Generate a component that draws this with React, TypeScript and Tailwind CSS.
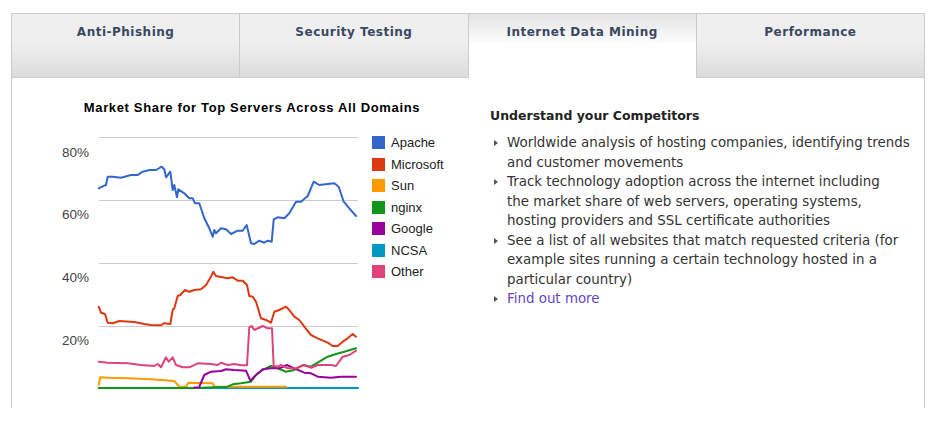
const tabs = ["Anti-Phishing", "Security Testing", "Internet Data Mining", "Performance"];
const activeTab = 2;

const series: { name: string; color: string; points: string }[] = [
  {
    name: "NCSA",
    color: "#0099c6",
    points: "98,388 357,388",
  },
  {
    name: "Sun",
    color: "#ff9900",
    points:
      "97.7,385 99.3,377.3 106.7,377.7 126.7,378.3 150,379.3 173.3,381 178.3,386.7 185,386.7 187.3,382.7 211.7,383.3 213.3,386.7 285,386.7",
  },
  {
    name: "nginx",
    color: "#109618",
    points:
      "97.7,388 196,388 213.3,387.3 226.7,386.7 231.7,384.3 240,383.3 250,381.7 255,375 261.7,370 270,366 276.7,368.3 285,371.7 293.3,370 301.7,365 310,366.7 318.3,361.7 326.7,356.7 335,354 343.3,351.7 355,348.3",
  },
  {
    name: "Google",
    color: "#990099",
    points:
      "193.3,387.5 198,387.5 203.3,375 210,371.7 220,371 225,369.3 233.3,370 245,370.7 249.3,380.7 255,375 261.7,369.3 270,368.3 278.3,368.3 286,365 293.3,368.3 303.3,372.7 310,373.3 316.7,376.7 330,377.7 340,376.7 355,376.7",
  },
  {
    name: "Other",
    color: "#dd4477",
    points:
      "97.7,361.7 106.7,362.7 126.7,363.3 140,365 153.3,366 156.7,364 160,367.3 165,357.3 167.7,361.7 171.7,357.3 175,365 181.7,367.3 188.3,367.3 196.7,363.3 210,364 216.7,365 220,362.7 226.7,365 233.3,364 240,365.3 246,365.3 248.3,327.3 250.7,326 253.3,330 261.7,326 266.7,328.3 271,328.3 272.7,366 276.7,366.7 280,365 286.7,368.3 295,368.3 303.3,365 310,367.7 316.7,365 330,365 335,366 341.7,356.7 348.3,355 355,350.7",
  },
  {
    name: "Microsoft",
    color: "#dc3912",
    points:
      "97.7,306.7 100,312.7 104,314 106.7,322.7 111.7,323.3 118.3,321 133.3,322 143.3,324 150,325 160,325.3 162.7,323.3 169.3,324 171.7,310 173.3,308.3 176.7,296 179.3,295 184,290 188.3,291.7 193.3,290 200,289.3 205,285 210,276.7 212.3,271.7 215,276 226.7,278.3 231.7,277.3 236.7,280.7 241.7,280.7 246,285 248.3,296 251.7,296.7 255,301.7 260,318.3 265,320 270,322.7 273.3,311.7 278.3,310 285,306.7 288.3,310 293.3,316.7 298.3,320 303.3,326.7 310,335 316.7,338.3 326.7,342.7 331.7,346 336.7,346 341.7,341.7 346.7,338.3 351.7,334 355,336.7",
  },
  {
    name: "Apache",
    color: "#3366cc",
    points:
      "97.7,188.3 103.3,185.7 105,185 106.7,176.7 111.7,176.7 120,177.7 130,175 136.7,175 141.7,171.7 148.3,170 155,170 160.7,166.7 163.3,169.3 165,177.3 169.3,171.7 171.7,190 173.3,185 176,197.3 177.3,189.3 183.3,193.3 188.3,198.3 191.7,198.3 194,203.3 198.3,203.3 203.3,218.3 208.3,228.3 211.7,236.7 213.3,230 215,233.3 220,228.3 225,229.3 230,234 236.7,230.7 241.7,230.7 245.7,225 250,243.3 253.3,244 258.3,240.7 263.3,242.7 266.7,240.7 270.7,241.7 272.7,219.3 276.7,217.3 283.3,218.3 288.3,213.3 295,201.7 300,201.7 306.7,196 312.7,181.7 318.3,185 326.7,184 333.3,183.3 337.7,186.7 342.7,201.7 348.3,208.3 355,216",
  },
];

const legend = [
  { name: "Apache", color: "bg-[#3366cc]" },
  { name: "Microsoft", color: "bg-[#dc3912]" },
  { name: "Sun", color: "bg-[#ff9900]" },
  { name: "nginx", color: "bg-[#109618]" },
  { name: "Google", color: "bg-[#990099]" },
  { name: "NCSA", color: "bg-[#0099c6]" },
  { name: "Other", color: "bg-[#dd4477]" },
];

// line breaks as in the original
const bullets = [
  ["Worldwide analysis of hosting companies, identifying trends", "and customer movements"],
  [
    "Track technology adoption across the internet including",
    "the market share of web servers, operating systems,",
    "hosting providers and SSL certificate authorities",
  ],
  [
    "See a list of all websites that match requested criteria (for",
    "example sites running a certain technology hosted in a",
    "particular country)",
  ],
];

function Arrow() {
  return (
    <span className="w-[17px] shrink-0 flex pt-[7px] pl-[4px]">
      <span className="w-0 h-0 border-y-[3.5px] border-y-transparent border-l-[4px] border-l-[#555555]" />
    </span>
  );
}

function Chart() {
  return (
    <svg width="322" height="275" viewBox="40 125 322 275" className="block shrink-0">
      {[137, 200, 263, 326].map((y) => (
        <line key={y} x1="98" x2="357" y1={y + 0.5} y2={y + 0.5} stroke="#cccccc" strokeWidth="1" />
      ))}
      <line x1="98" x2="357" y1="388.5" y2="388.5" stroke="#333333" strokeWidth="1" />
      {[
        ["80%", 157],
        ["60%", 219],
        ["40%", 282],
        ["20%", 345],
      ].map(([label, y]) => (
        <text
          key={label}
          x="88"
          y={y}
          textAnchor="end"
          fontSize="13.5"
          fill="#444444"
          fontFamily="'Liberation Sans', Arial, sans-serif"
        >
          {label}
        </text>
      ))}
      {series.map((s) => (
        <polyline
          key={s.name}
          points={s.points}
          fill="none"
          stroke={s.color}
          strokeWidth="2"
          strokeLinejoin="round"
          strokeLinecap="round"
        />
      ))}
    </svg>
  );
}

export default function App() {
  return (
    <div className="w-[952px] h-[442px] bg-white pt-[13px] pl-[11px] overflow-hidden">
      <div className="w-[914px] flex flex-col">
        {/* Tabs */}
        <div className="flex h-[65px]">
          {tabs.map((t, i) => (
            <div
              key={t}
              className={
                "flex-1 flex justify-center pt-[10px] border-t border-r border-[#cccccc] " +
                (i === 0 ? "border-l " : "") +
                (i === activeTab
                  ? "bg-linear-to-b from-[#e4e4e4] to-white to-50%"
                  : "bg-linear-to-b from-[#efefef] from-45% to-[#dcdcdc] border-b")
              }
            >
              <span className="font-['DejaVu_Sans',Verdana,sans-serif] font-bold text-[12px] leading-[16px] text-[#3a4863] tracking-[0.5px]">
                {t}
              </span>
            </div>
          ))}
        </div>

        {/* Panel */}
        <div className="h-[330px] border-l border-r border-[#cccccc] flex pl-[29px]">
          {/* Chart */}
          <div className="w-[420px] pt-[22px]">
            <div className="text-center font-['Liberation_Sans',Arial,sans-serif] font-bold text-[13px] leading-[16px] tracking-[0.65px] text-black pl-[2px] whitespace-nowrap">
              Market Share for Top Servers Across All Domains
            </div>
            <div className="flex mt-[9px]">
              <Chart />
              <div className="flex flex-col mt-[7px] ml-[9px]">
                {legend.map((l) => (
                  <div key={l.name} className="flex items-center h-[21.5px]">
                    <span className={"w-[13px] h-[13px] " + l.color} />
                    <span className="ml-[6px] font-['Liberation_Sans',Arial,sans-serif] text-[13px] text-[#222222]">
                      {l.name}
                    </span>
                  </div>
                ))}
              </div>
            </div>
          </div>

          {/* Text */}
          <div className="ml-[29px] pt-[29px] font-['DejaVu_Sans',Verdana,sans-serif] text-[#333333]">
            <h3 className="font-bold text-[12.5px] leading-[18px] text-[#222222]">Understand your Competitors</h3>
            <ul className="mt-[8px] text-[13.4px] leading-[19.5px]">
              {bullets.map((lines) => (
                <li key={lines[0]} className="flex">
                  <Arrow />
                  <span className="whitespace-nowrap">
                    {lines.map((l, j) => (
                      <span key={j}>
                        {l}
                        {j < lines.length - 1 && <br />}
                      </span>
                    ))}
                  </span>
                </li>
              ))}
              <li className="flex">
                <Arrow />
                <a href="#" className="text-[#5f47c4]">
                  Find out more
                </a>
              </li>
            </ul>
          </div>
        </div>
      </div>
    </div>
  );
}
